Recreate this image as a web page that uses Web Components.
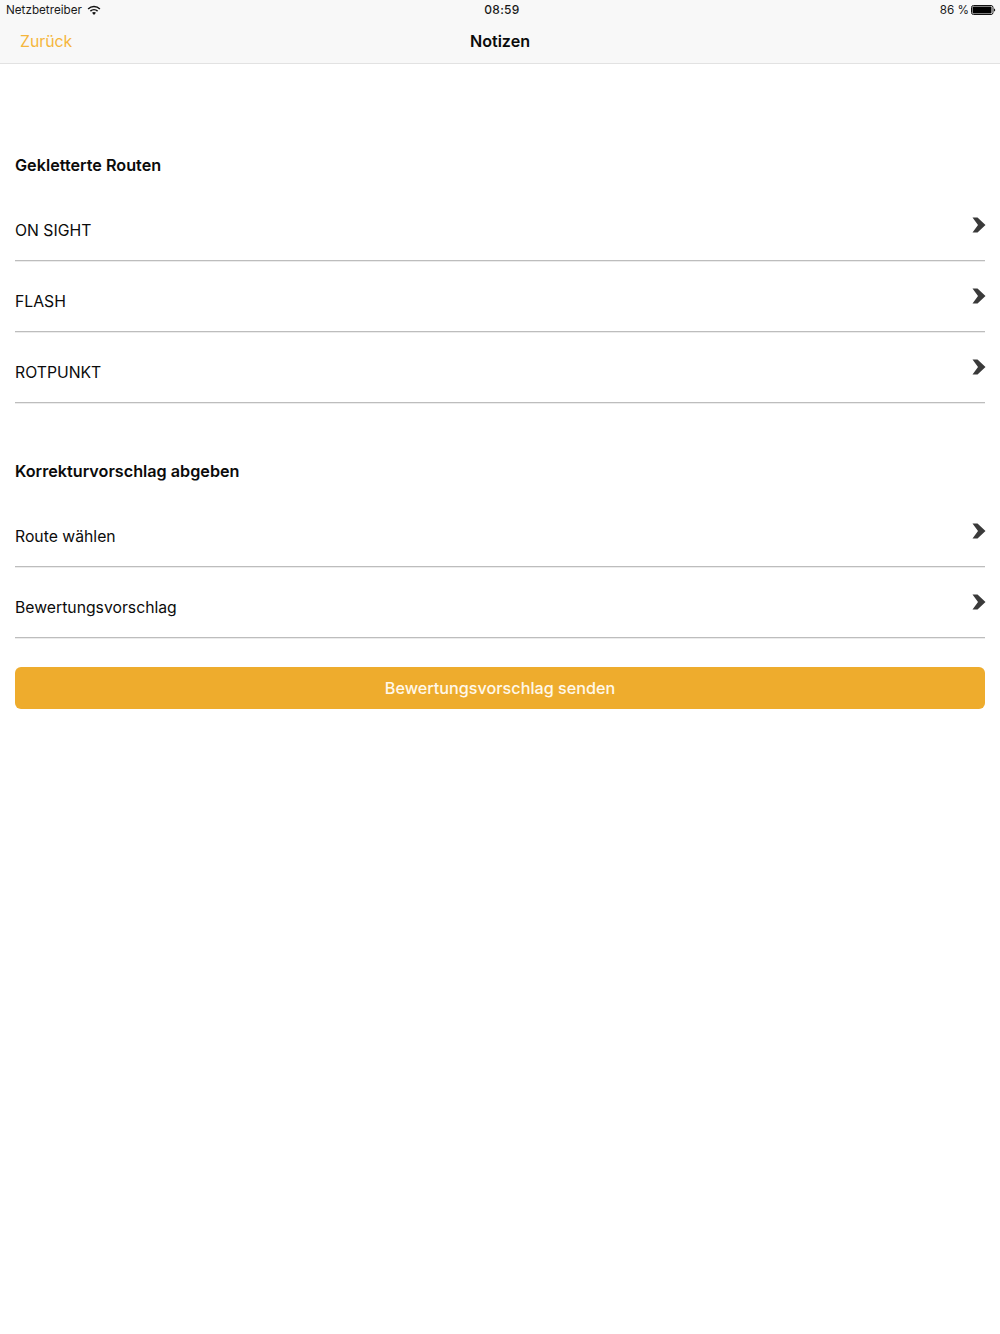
<!DOCTYPE html>
<html lang="de">
<head>
<meta charset="utf-8">
<title>Notizen</title>
<style>
  html, body { margin: 0; background: #fff; }
  body { font-family: Inter, "Liberation Sans", sans-serif; color: #0b0b0b; }
  main { display: block; padding: 0 15px; }
</style>
</head>
<body>
<ios-header back="Zurück" heading="Notizen"></ios-header>
<main>
  <route-section heading="Gekletterte Routen" style="margin-top:90px">
    <list-row>ON SIGHT</list-row>
    <list-row>FLASH</list-row>
    <list-row>ROTPUNKT</list-row>
  </route-section>
  <route-section heading="Korrekturvorschlag abgeben" style="margin-top:57px">
    <list-row>Route wählen</list-row>
    <list-row>Bewertungsvorschlag</list-row>
  </route-section>
  <send-button>Bewertungsvorschlag senden</send-button>
</main>

<script>
// Status bar + nav bar
class IosHeader extends HTMLElement {
  constructor() {
    super();
    this.attachShadow({ mode: 'open' });
  }

  connectedCallback() {
    const back = this.getAttribute('back') || '';
    const heading = this.getAttribute('heading') || '';
    this.shadowRoot.innerHTML = `
      <style>
        :host {
          display: block;
          height: 63px;
          background: #f8f8f8;
          border-bottom: 1px solid #e2e2e2;
        }
        .status {
          display: grid;
          grid-template-columns: 1fr auto 1fr;
          align-items: center;
          height: 19px;
          padding: 0 4px 0 6px;
          font-size: 11.7px;
          color: #1a1a1a;
        }
        .left { display: flex; align-items: center; gap: 5px; }
        .right { display: flex; align-items: center; justify-content: flex-end; gap: 2px; }
        .time { font-weight: 500; font-size: 12px; letter-spacing: .3px; padding-left: 2px; }
        .nav {
          display: grid;
          grid-template-columns: 1fr auto 1fr;
          align-items: center;
          height: 44px;
          padding: 0 20px;
        }
        .back { color: #f5b63c; font-size: 15.8px; }
        .title { font-size: 16.1px; font-weight: 600; color: #0b0b0b; }
      </style>
      <div class="status">
        <div class="left">
          <span>Netzbetreiber</span>
          <svg width="14" height="10" viewBox="0 0 14 10">
            <path d="M0.6 3.4a9.2 9.2 0 0 1 12.8 0l-1 1.1a7.8 7.8 0 0 0-10.8 0z" fill="#111"/>
            <path d="M2.9 5.6a6 6 0 0 1 8.2 0l-1 1.1a4.6 4.6 0 0 0-6.2 0z" fill="#111"/>
            <path d="M5 7.8a3 3 0 0 1 4 0L7 9.9z" fill="#111"/>
          </svg>
        </div>
        <div class="time">08:59</div>
        <div class="right">
          <span>86 %</span>
          <svg width="25" height="10" viewBox="0 0 25 10">
            <rect x="0.5" y="0.5" width="21.5" height="9" rx="2" fill="#fff" stroke="#111"/>
            <rect x="1.5" y="1.5" width="19" height="7" rx="1" fill="#000"/>
            <path d="M23 3.5c.8.2 1.2.7 1.2 1.5s-.4 1.3-1.2 1.5z" fill="#111"/>
          </svg>
        </div>
      </div>
      <div class="nav">
        <div class="back">${back}</div>
        <div class="title">${heading}</div>
        <div></div>
      </div>
    `;
  }
}

// Heading with a list of rows under it
class RouteSection extends HTMLElement {
  constructor() {
    super();
    this.attachShadow({ mode: 'open' });
  }

  connectedCallback() {
    this.shadowRoot.innerHTML = `
      <style>
        :host { display: block; }
        h2 {
          margin: 0 0 14px;
          height: 22px;
          line-height: 22px;
          font-size: 16.2px;
          font-weight: 600;
          color: #0b0b0b;
        }
        .rows { display: flex; flex-direction: column; }
      </style>
      <h2>${this.getAttribute('heading') || ''}</h2>
      <div class="rows"><slot></slot></div>
    `;
  }
}

// One tappable row, text plus chevron
class ListRow extends HTMLElement {
  constructor() {
    super();
    this.attachShadow({ mode: 'open' });
  }

  connectedCallback() {
    this.shadowRoot.innerHTML = `
      <style>
        :host {
          display: flex;
          justify-content: space-between;
          height: 70px;
          border-bottom: 1px solid #bdbdbd;
          box-shadow: 0 1px 0 #ececec;
          font-size: 15.75px;
          color: #0b0b0b;
        }
        .text { padding-top: 30px; line-height: 22px; }
        svg { margin: 27px -1px 0 0; }
      </style>
      <div class="text"><slot></slot></div>
      <svg width="14" height="16" viewBox="0 0 14 16">
        <path d="M0.5 0.5H5.5L13.5 8L5.5 15.5H0.5L6 8Z" fill="#3a3a3a"/>
      </svg>
    `;
  }
}

class SendButton extends HTMLElement {
  constructor() {
    super();
    this.attachShadow({ mode: 'open' });
  }

  connectedCallback() {
    this.shadowRoot.innerHTML = `
      <style>
        :host {
          display: flex;
          align-items: center;
          justify-content: center;
          height: 42px;
          margin-top: 29px;
          background: #eeac2d;
          border-radius: 6px;
          color: #fff8ea;
          font-size: 16.2px;
          font-weight: 500;
        }
      </style>
      <slot></slot>
    `;
  }
}

customElements.define('ios-header', IosHeader);
customElements.define('route-section', RouteSection);
customElements.define('list-row', ListRow);
customElements.define('send-button', SendButton);
</script>
</body>
</html>
